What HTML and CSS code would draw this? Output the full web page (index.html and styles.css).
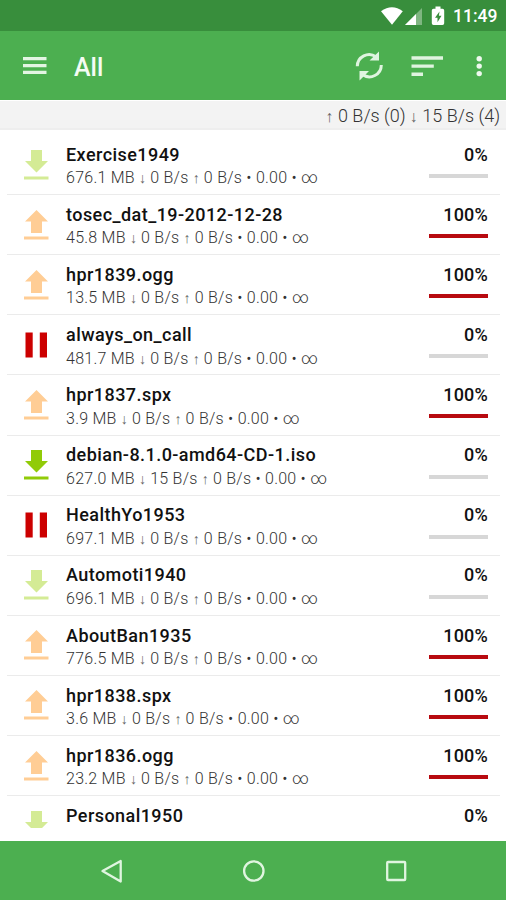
FILE: index.html
```html
<!DOCTYPE html>
<html lang="en">
<head>
<meta charset="utf-8">
<title>Torrents</title>
<link rel="stylesheet" href="styles.css">
</head>
<body>
<div class="status">
  <svg width="126" height="31" viewBox="0 0 126 31">
    <path fill="#fff" d="M1 11.2Q12 3.4 22.8 11.2L12 24.8Z"/>
    <path fill="#7fb681" d="M42 8V25H25Z"/>
    <path fill="#fff" d="M36 14V25H25Z"/>
    <path fill="#fff" fill-rule="evenodd" d="M55.5 6.6h5v2.2h2q1.7 0 1.7 1.7v12.8q0 1.7-1.7 1.7h-9q-1.700 0-1.700-1.700V10.500q0-1.700 1.700-1.700h2ZM59.500 11.500l-4.500 6.300h2.500v4.500l4-6.500h-2.600Z"/>
  </svg>
  <span class="clock">11:49</span>
</div>
<div class="toolbar">
  <svg class="menu" width="24" height="18" viewBox="0 0 24 18"><path fill="#e3f5e3" d="M0 0h23.500v3.300H0zM0 7h23.500v3.300H0zM0 13.800h23.500v3.300H0z"/></svg>
  <h1>All</h1>
  <svg class="actions" width="134" height="32" viewBox="0 0 134 32">
    <g fill="none" stroke="#dff4df" stroke-width="3">
      <path d="M2.300 16.300A11.800 11.800 0 0 1 21 6.800"/>
      <path d="M26.300 15A11.800 11.800 0 0 1 7.500 24.500"/>
    </g>
    <path fill="#dff4df" d="M24 1.500V10.400H14.500ZM4.500 30.500V21H14Z"/>
    <path fill="#dff4df" d="M56.500 6.300h31.500v3.400H56.500zM56.500 14.400h22.300v3.400H56.500zM56.500 22.600h11.500v3.400H56.500z"/>
    <g fill="#eef9ee"><circle cx="124.200" cy="8.700" r="2.700"/><circle cx="124.200" cy="16.100" r="2.700"/><circle cx="124.200" cy="23.600" r="2.700"/></g>
  </svg>
</div>
<div class="stats"><span class="rates"><i>↑</i> 0 B/s (0) <i>↓</i> 15 B/s (4)</span></div>
<main class="list" id="list"></main>
<nav class="nav">
  <svg width="506" height="59" viewBox="0 0 506 59" fill="none" stroke="#e0f5e0" stroke-width="2.300" stroke-linejoin="round">
    <path d="M102.500 30L120.700 20V40.500Z"/>
    <circle cx="253.800" cy="30" r="9.700"/>
    <rect x="387.200" y="21" width="18" height="18" rx=".8"/>
  </svg>
</nav>
<script src="list.js"></script>
</body>
</html>
```
FILE: styles.css
```css
* { box-sizing: border-box; }
body {
  margin: 0;
  width: 506px;
  height: 900px;
  overflow: hidden;
  display: flex;
  flex-direction: column;
  background: #fff;
  color: #111;
  font-family: Roboto, "Liberation Sans", sans-serif;
}
svg { display: block; flex: none; }
.status {
  height: 31px;
  background: #388e3c;
  display: flex;
  padding-left: 380px;
}
.clock {
  margin-left: -53px;
  color: #fff;
  font-size: 17.500px;
  font-weight: 500;
  line-height: 33px;
}
.toolbar {
  height: 69px;
  background: #4caf50;
  display: flex;
  align-items: center;
  padding: 0 6px 0 23px;
}
.menu { margin-top: 1px; }
.toolbar h1 {
  margin: 4px auto 0 27px;
  color: #f4fcf4;
  font-size: 25px;
  font-weight: 500;
  line-height: 30px;
}
.actions { margin-right: 11px; }
.stats {
  height: 30px;
  border-top: 1px solid #fff;
  border-bottom: 2px solid #eee;
  background: #f3f3f3;
  padding-right: 6px;
  text-align: right;
  color: #333;
  font-size: 18px;
  font-weight: 300;
  line-height: 29px;
  white-space: nowrap;
}
i {
  display: inline-block;
  width: .5em;
  line-height: 1;
  text-align: center;
  font-family: "Liberation Sans", sans-serif;
  font-style: normal;
  font-size: .88em;
  color: #666;
}
.list {
  flex: none;
  height: 698px;
  margin-bottom: 13px;
  padding: 5px 6px 0 7px;
  overflow: hidden;
}
.row {
  height: 60.120px;
  border-bottom: 1.500px solid #ebebeb;
  display: flex;
}
.icon { margin: 12.500px 17px 0; }
.info { flex: 1; padding-top: 8.700px; white-space: nowrap; }
.name { height: 22.500px; font-size: 18px; font-weight: 500; line-height: 22px; letter-spacing: .44px; }
.meta { height: 24px; color: #333; font-size: 16px; font-weight: 300; line-height: 24px; letter-spacing: .25px; }
.progress { width: 59px; margin-right: 12px; padding-top: 8.700px; }
.percent { font-size: 18px; font-weight: 500; line-height: 22px; text-align: right; letter-spacing: .2px; }
.bar { height: 4px; margin-top: 8.300px; background: #d7d7d7; }
.bar div { height: 4px; background: #b80a10; }
.nav { flex: none; height: 59px; background: #4caf50; }
```
FILE: list.js
```js
const shapes = {
  down: '<path d="M7 2h11v11h6L12.500 24.500 1 13h6zM0 28.500h24.500v3H0z"/>',
  up: '<path d="M12.500 2L24 13.500h-6V25H7V13.500H1zM0 28.500h24.500v3H0z"/>',
  pause: '<path d="M1.500 4.500h7.200V29.500H1.500zM15.800 4.500H23V29.500h-7.200z"/>'
};
const torrents = [
  ["Exercise1949", "676.1 MB", "0", 0, "down", "#d4eb95"],
  ["tosec_dat_19-2012-12-28", "45.8 MB", "0", 100, "up", "#ffcd95"],
  ["hpr1839.ogg", "13.5 MB", "0", 100, "up", "#ffcd95"],
  ["always_on_call", "481.7 MB", "0", 0, "pause", "#cc0000"],
  ["hpr1837.spx", "3.9 MB", "0", 100, "up", "#ffcd95"],
  ["debian-8.1.0-amd64-CD-1.iso", "627.0 MB", "15", 0, "down", "#91cb08"],
  ["HealthYo1953", "697.1 MB", "0", 0, "pause", "#cc0000"],
  ["Automoti1940", "696.1 MB", "0", 0, "down", "#d4eb95"],
  ["AboutBan1935", "776.5 MB", "0", 100, "up", "#ffcd95"],
  ["hpr1838.spx", "3.6 MB", "0", 100, "up", "#ffcd95"],
  ["hpr1836.ogg", "23.2 MB", "0", 100, "up", "#ffcd95"],
  ["Personal1950", "", "0", 0, "down", "#d4eb95"]
];
document.getElementById("list").innerHTML = torrents.map(([name, size, rate, pct, icon, color]) => `
<div class="row">
  <svg class="icon" width="25" height="34" viewBox="0 0 25 34" fill="${color}">${shapes[icon]}</svg>
  <div class="info">
    <div class="name">${name}</div>
    ${size ? `<div class="meta">${size} <i>↓</i> ${rate} B/s <i>↑</i> 0 B/s • 0.00 • ∞</div>` : ""}
  </div>
  <div class="progress">
    <div class="percent">${pct}%</div>
    ${size ? `<div class="bar"><div style="width:${pct}%"></div></div>` : ""}
  </div>
</div>`).join("");
```
